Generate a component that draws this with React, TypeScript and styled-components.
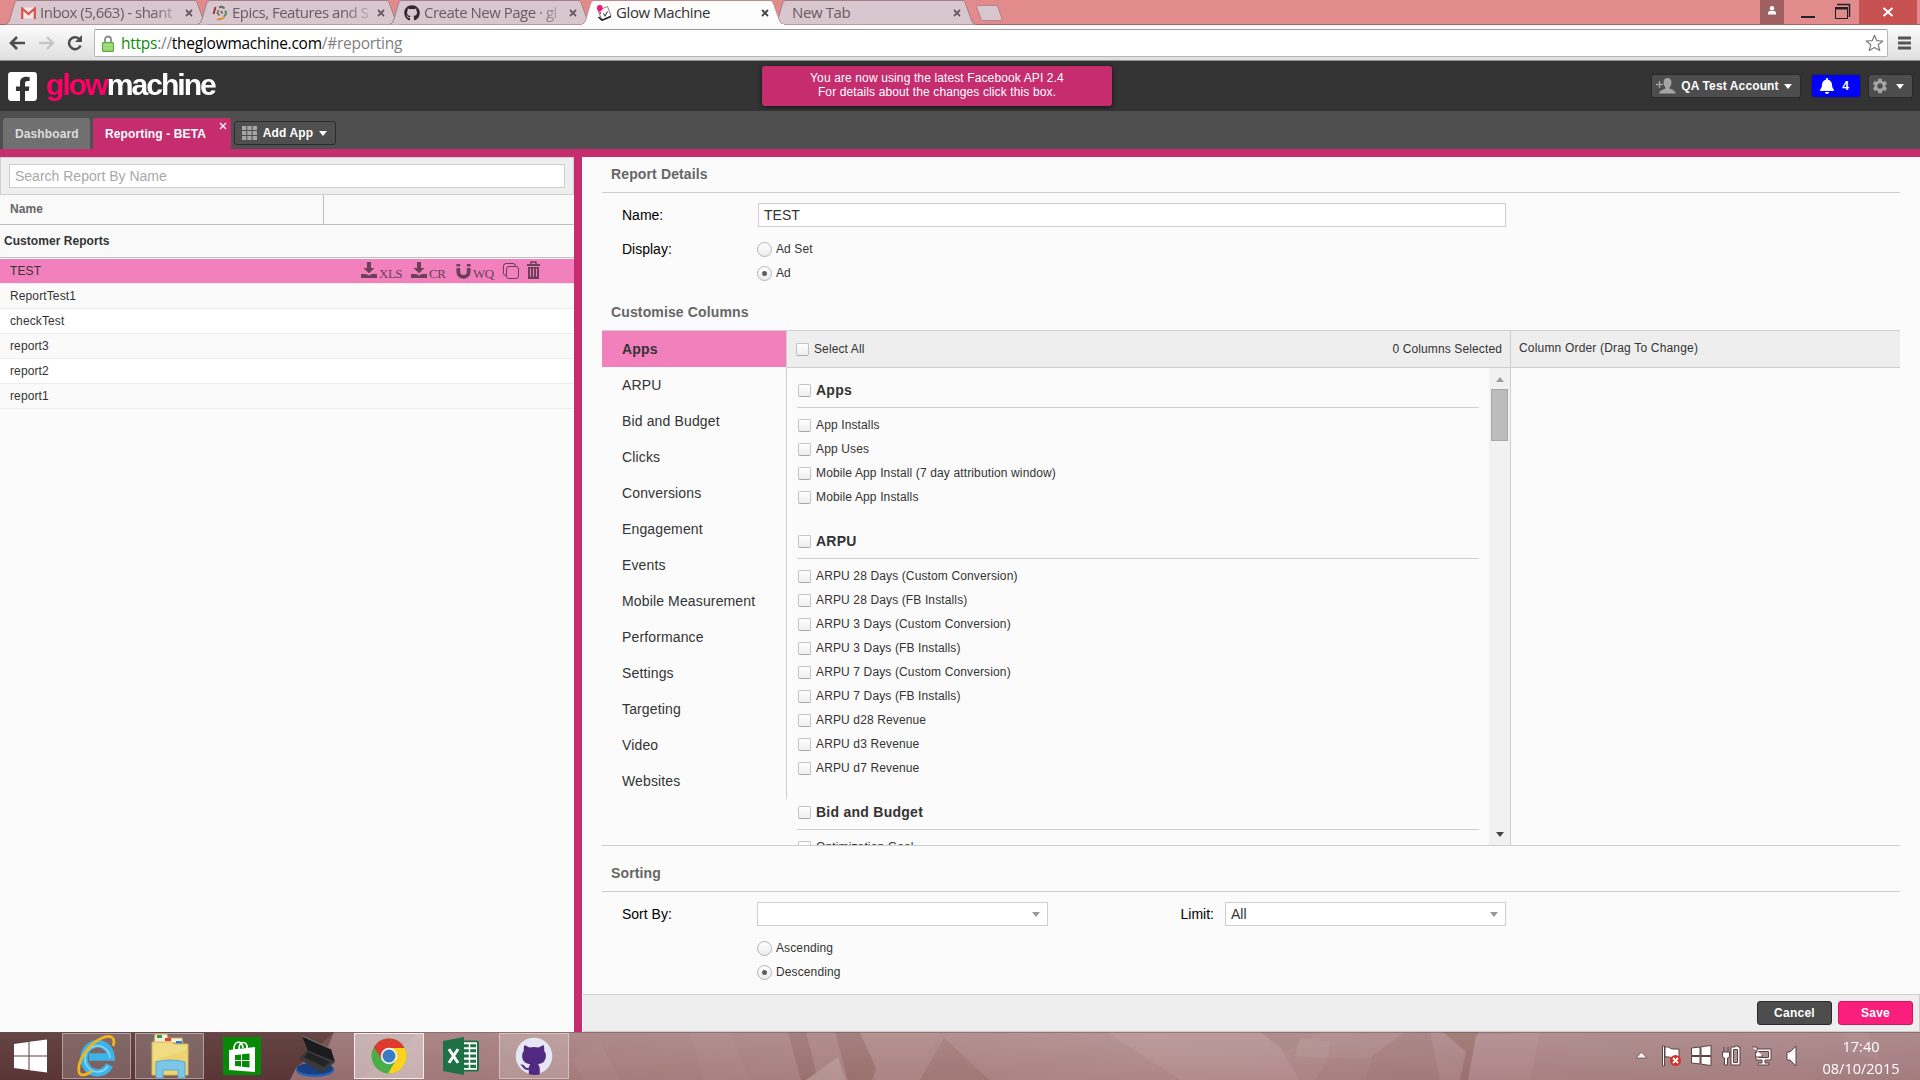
import React from "react";
import styled, { createGlobalStyle, css } from "styled-components";
import { FaBell, FaFacebookSquare, FaGithub } from "react-icons/fa";
import { MdSettings } from "react-icons/md";

const PINK = "#c52d6f";
const ROSE = "#f180bd";
const LINE = "#cecece";

const GlobalStyle = createGlobalStyle`
  * { box-sizing: border-box; }
  html, body { margin: 0; padding: 0; overflow: hidden; }
  body { font-family: "Liberation Sans", Arial, sans-serif; font-size: 12px; letter-spacing: 0.12px; color: #333; }
  svg { display: block; flex: none; }
`;

const Screen = styled.div`
  width: 1920px;
  height: 1080px;
  display: flex;
  flex-direction: column;
  overflow: hidden;
  background: #fbfbfb;
`;

/* ---------- Browser frame ---------- */

const TabStrip = styled.div`
  height: 25px;
  flex: none;
  display: flex;
  background: #e28b8d;
  border-bottom: 1px solid #a76365;
  padding-left: 5px;
`;

const BrowserTabBox = styled.div<{ $active?: boolean; $plain?: boolean }>`
  position: relative;
  z-index: ${(p) => (p.$active ? 2 : 1)};
  width: 204px;
  margin-right: -12px;
  height: 25px;
  flex: none;
  display: flex;
  align-items: center;
  padding: 0 16px 0 ${(p) => (p.$plain ? 19 : 15)}px;
  color: ${(p) => (p.$active ? "#333" : "#6d5a60")};
`;

const TabShape = styled.svg`
  position: absolute;
  left: 0;
  top: 0;
`;

const TabIcon = styled.span`
  position: relative;
  width: 16px;
  height: 18px;
  margin-right: 4px;
  display: flex;
  align-items: center;
  justify-content: center;
`;

const TabLabel = styled.span<{ $fade?: boolean }>`
  position: relative;
  flex: 1;
  height: 22px;
  line-height: 21px;
  overflow: hidden;
  white-space: nowrap;
  font-family: "Open Sans", "Noto Sans", sans-serif;
  font-size: 15px;
  letter-spacing: ${(p) => (p.$fade ? -0.5 : -0.4)}px;
  ${(p) =>
    p.$fade &&
    css`
      mask-image: linear-gradient(to right, #000 80%, transparent 103%);
    `}
`;

const TabClose = styled.svg`
  position: relative;
  margin-left: 4px;
`;

const NewTabButton = styled.svg`
  margin-left: 5px;
`;

const WindowControls = styled.div`
  margin-left: auto;
  display: flex;
  height: 24px;
  padding-right: 3px;
`;

const ControlCell = styled.div<{ $w: number; $bg?: string }>`
  width: ${(p) => p.$w}px;
  height: 24px;
  background: ${(p) => p.$bg ?? "transparent"};
  display: flex;
  align-items: center;
  justify-content: center;
`;

const BrowserBar = styled.div`
  height: 36px;
  flex: none;
  display: flex;
  align-items: center;
  padding: 1px 9px 0 9px;
  background: linear-gradient(#fcfcfc, #dfdfdf);
  border-bottom: 1px solid #8f8f8f;
`;

const NavIcons = styled.div`
  display: flex;
  gap: 12px;
  width: 85px;
  align-items: center;
`;

const Omnibox = styled.div`
  width: 1794px;
  height: 28px;
  background: #fff;
  border: 1px solid #b6b6b6;
  border-top-color: #999;
  border-radius: 2px;
  display: flex;
  align-items: center;
  padding: 0 3px 0 7px;
`;

const Url = styled.span`
  flex: 1;
  margin-left: 7px;
  font-family: "Open Sans", "Noto Sans", sans-serif;
  font-size: 15.5px;
  line-height: 22px;
  letter-spacing: -0.26px;
  color: #808080;
`;
const Secure = styled.span`
  color: #0c8c0c;
`;
const Host = styled.span`
  color: #000;
`;

/* ---------- Application header ---------- */

const Header = styled.header`
  height: 50px;
  flex: none;
  background: #333;
  display: flex;
  position: relative;
  padding: 14px 8px 0 6px;
`;

const Brand = styled.div`
  display: flex;
  height: 36px;
  margin-top: -5px;
`;

const Wordmark = styled.div`
  margin: -3px 0 0 7px;
  font-size: 30px;
  line-height: 36px;
  font-weight: 700;
  letter-spacing: -2px;
  color: #fff;
  transform: scaleX(1.005);
  transform-origin: 0 0;
`;
const Glow = styled.span`
  color: #ff0066;
`;

const Notice = styled.div`
  position: absolute;
  left: 762px;
  top: 5px;
  width: 350px;
  height: 40px;
  border-radius: 3px;
  background: ${PINK};
  color: #fff;
  text-align: center;
  line-height: 14px;
  padding-top: 5px;
  box-shadow: 0 1px 4px #111;
`;

const HeaderTools = styled.div`
  margin-left: auto;
  display: flex;
`;

const ToolButton = styled.div<{ $w: number; $bg?: string; $gap?: number; $pad?: string }>`
  width: ${(p) => p.$w}px;
  height: 22px;
  margin-right: ${(p) => p.$gap ?? 0}px;
  background: ${(p) => p.$bg ?? "#4d4d4d"};
  border-radius: 2px;
  display: flex;
  align-items: center;
  justify-content: space-between;
  padding: ${(p) => p.$pad ?? "0 8px 0 4px"};
  color: #fff;
  font-weight: 700;
  box-shadow: 0 0 0 1px #2a2a2a;
`;

const Caret = styled.i<{ $color?: string; $up?: boolean }>`
  width: 0;
  height: 0;
  border: 4px solid transparent;
  border-bottom-width: ${(p) => (p.$up ? 5 : 0)}px;
  border-top-width: ${(p) => (p.$up ? 0 : 5)}px;
  ${(p) => (p.$up ? "border-bottom-color" : "border-top-color")}: ${(p) => p.$color ?? "#fff"};
`;

const AppTabs = styled.nav`
  height: 46px;
  flex: none;
  background: #4f4f4f;
  border-bottom: 8px solid ${PINK};
  display: flex;
  padding: 7px 0 0 3px;
`;

const AppTab = styled.div<{ $active?: boolean; $w: number }>`
  width: ${(p) => p.$w}px;
  height: 31px;
  margin-right: 3px;
  padding-left: 12px;
  border-radius: 3px 3px 0 0;
  line-height: 32px;
  font-weight: 700;
  position: relative;
  background: ${(p) => (p.$active ? PINK : "#707070")};
  color: ${(p) => (p.$active ? "#fff" : "#ddd")};
`;

const AppTabClose = styled.svg`
  position: absolute;
  right: 4px;
  top: 4px;
`;

const AddApp = styled.div`
  width: 102px;
  height: 24px;
  margin-top: 3px;
  border: 1px solid #2b2b2b;
  border-radius: 3px;
  display: flex;
  align-items: center;
  justify-content: space-between;
  padding: 0 8px 0 7px;
  color: #fff;
  font-weight: 700;
`;

const Workspace = styled.main`
  flex: 1;
  min-height: 0;
  display: flex;
`;

/* ---------- Report list ---------- */

const Sidebar = styled.aside`
  width: 582px;
  border-right: 8px solid ${PINK};
`;

const SearchBar = styled.div`
  height: 38px;
  background: #eee;
  border: 1px solid #d0d0d0;
  padding: 6px 8px;
`;

const Field = styled.div<{ $w: number; $muted?: boolean }>`
  width: ${(p) => p.$w}px;
  height: 24px;
  background: #fff;
  border: 1px solid ${LINE};
  padding: 0 7px 0 5px;
  display: flex;
  align-items: center;
  justify-content: space-between;
  font-size: 14px;
  letter-spacing: 0;
  color: ${(p) => (p.$muted ? "#a9a9a9" : "#333")};
`;

const ListHead = styled.div`
  height: 30px;
  background: #f9f9f9;
  border-bottom: 1px solid #c0c0c0;
  display: flex;
  font-weight: 700;
  color: #666;
  line-height: 28px;
`;

const ListHeadCell = styled.div<{ $w: number; $divided?: boolean }>`
  width: ${(p) => p.$w}px;
  padding-left: 10px;
  border-right: ${(p) => (p.$divided ? "1px solid #c0c0c0" : "none")};
`;

const GroupRow = styled.div`
  height: 33px;
  margin-bottom: 1px;
  padding: 1px 0 0 4px;
  line-height: 30px;
  font-weight: 700;
  background: #f9f9f9;
  border-bottom: 1px solid #c0c0c0;
  letter-spacing: 0.05px;
`;

const ReportRow = styled.div<{ $selected?: boolean; $alt?: boolean }>`
  height: 25px;
  padding-left: 10px;
  display: flex;
  line-height: 24px;
  border-bottom: 1px solid #ededed;
  background: ${(p) => (p.$selected ? ROSE : p.$alt ? "#fafafa" : "#fff")};
`;

const RowActions = styled.div`
  margin: 0 34px 0 auto;
  display: flex;
  align-items: flex-start;
  color: #6b4058;
  font-family: "Liberation Serif", "Times New Roman", serif;
  font-size: 13px;
  line-height: 30px;
  letter-spacing: -0.5px;
`;

const RowAction = styled.span<{ $w: number; $top: number }>`
  width: ${(p) => p.$w}px;
  display: flex;
  gap: 2px;
  svg {
    margin-top: ${(p) => p.$top}px;
  }
`;

/* ---------- Report editor ---------- */

const Editor = styled.section`
  flex: 1;
  display: flex;
  flex-direction: column;
`;

const EditorBody = styled.div`
  flex: 1;
  margin: 0 20px;
`;

const SectionTitle = styled.h2<{ $h: number; $pt: number }>`
  margin: 0;
  height: ${(p) => p.$h}px;
  padding: ${(p) => p.$pt}px 0 0 9px;
  font-size: 14px;
  line-height: 18px;
  font-weight: 700;
  letter-spacing: 0.13px;
  color: #666;
  border-bottom: 1px solid ${LINE};
`;

const FormRow = styled.div`
  display: flex;
  margin-top: 10px;
`;

const FormLabel = styled.label<{ $w: number; $right?: boolean }>`
  width: ${(p) => p.$w}px;
  padding-left: 20px;
  padding-right: ${(p) => (p.$right ? 11 : 0)}px;
  text-align: ${(p) => (p.$right ? "right" : "left")};
  font-size: 14px;
  line-height: 24px;
  letter-spacing: 0;
  color: #000;
`;

const RadioLine = styled.div`
  height: 24px;
  display: flex;
  align-items: center;
  gap: 4px;
  line-height: 22px;
`;

const Radio = styled.span<{ $on?: boolean }>`
  width: 15px;
  height: 15px;
  margin-top: 1px;
  border: 1px solid #b5b5b5;
  border-radius: 50%;
  display: flex;
  align-items: center;
  justify-content: center;
  background: linear-gradient(#fff, #ececec);
  &::after {
    content: "";
    width: 5px;
    height: 5px;
    border-radius: 50%;
    background: ${(p) => (p.$on ? "#5c5c5c" : "transparent")};
  }
`;

const ColumnPicker = styled.div`
  height: 515px;
  display: flex;
  border-bottom: 1px solid ${LINE};
`;

const Categories = styled.div`
  width: 185px;
  height: 468px;
  border-right: 1px solid ${LINE};
`;

const Category = styled.div<{ $active?: boolean }>`
  height: 36px;
  padding-left: 20px;
  font-size: 14px;
  line-height: 36px;
  letter-spacing: 0.14px;
  ${(p) =>
    p.$active &&
    css`
      background: ${ROSE};
      font-weight: 700;
    `}
`;

const Available = styled.div`
  width: 724px;
  border-right: 1px solid ${LINE};
  display: flex;
  flex-direction: column;
`;

const PickerHead = styled.div`
  height: 37px;
  flex: none;
  background: #eee;
  border-bottom: 1px solid ${LINE};
  display: flex;
  align-items: center;
  justify-content: space-between;
  padding: 0 8px 0 9px;
`;

const PickerScroll = styled.div`
  flex: 1;
  min-height: 0;
  display: flex;
`;

const OptionList = styled.div`
  flex: 1;
  overflow: hidden;
  padding: 11px 10px 0;
`;

const OptionGroup = styled.div`
  margin-bottom: 21px;
`;

const GroupTitle = styled.div`
  height: 29px;
  padding: 0 0 6px 1px;
  margin-bottom: 5px;
  border-bottom: 1px solid ${LINE};
  display: flex;
  align-items: center;
  gap: 5px;
  font-size: 14px;
  font-weight: 700;
  letter-spacing: 0.26px;
`;

const Option = styled.div`
  height: 24px;
  padding-left: 1px;
  display: flex;
  align-items: center;
  gap: 5px;
  line-height: 22px;
  letter-spacing: 0.13px;
`;

const OptionText = styled.span`
  margin-top: -1px;
`;

const Checkbox = styled.span<{ $drop?: number }>`
  width: 13px;
  height: 13px;
  margin-top: ${(p) => p.$drop ?? 0}px;
  border: 1px solid #c4c4c4;
  border-bottom-color: #a8a8a8;
  border-radius: 2px;
  background: linear-gradient(#fff, #eee);
`;

const CheckLabel = styled.span`
  display: flex;
  align-items: center;
  gap: 5px;
`;

const Scrollbar = styled.div`
  width: 21px;
  background: #f1f1f1;
  display: flex;
  flex-direction: column;
  align-items: center;
  padding: 9px 0 8px;
`;

const Thumb = styled.div`
  width: 17px;
  height: 52px;
  margin: 7px 0 auto;
  background: #bcbcbc;
  border: 1px solid #a8a8a8;
`;

const Ordered = styled.div`
  flex: 1;
`;

const OrderHead = styled(PickerHead)`
  padding: 0 8px 2px;
  letter-spacing: 0.18px;
`;

const Footer = styled.footer`
  height: 38px;
  margin-left: 1px;
  background: #eee;
  border: 1px solid ${LINE};
  border-left: 0;
  display: flex;
  justify-content: flex-end;
  align-items: center;
  gap: 6px;
  padding-right: 6px;
`;

const Button = styled.button<{ $primary?: boolean }>`
  width: 75px;
  height: 24px;
  padding: 0;
  border-radius: 3px;
  border: 1px solid ${(p) => (p.$primary ? "#d6145f" : "#2b2b2b")};
  background: ${(p) => (p.$primary ? "#fa1e7d" : "#4d4d4d")};
  color: #fff;
  font: 700 12px "Liberation Sans", Arial, sans-serif;
  letter-spacing: 0.25px;
`;

/* ---------- Taskbar ---------- */

const Taskbar = styled.div`
  height: 48px;
  flex: none;
  position: relative;
  display: flex;
  background: #ab8787;
`;

const TaskbarArt = styled.svg`
  position: absolute;
  left: 0;
  top: 0;
`;

const TaskItem = styled.div<{ $w: number; $state?: "open" | "active"; $ml?: number }>`
  position: relative;
  width: ${(p) => p.$w}px;
  height: 46px;
  margin: 1px 0 0 ${(p) => p.$ml ?? 0}px;
  display: flex;
  align-items: center;
  justify-content: center;
  border: 1px solid
    ${(p) => (p.$state === "active" ? "#f3eaea" : p.$state === "open" ? "rgba(255,255,255,.38)" : "transparent")};
  background: ${(p) =>
    p.$state === "active" ? "rgba(255,255,255,.42)" : p.$state === "open" ? "rgba(255,255,255,.2)" : "none"};
`;

const Tray = styled.div`
  position: relative;
  margin-left: auto;
  display: flex;
  align-items: center;
`;

const Clock = styled.div`
  width: 119px;
  padding: 3px 0 0 1px;
  text-align: center;
  color: #fff;
  font-family: "Open Sans", "Noto Sans", sans-serif;
  font-size: 14.5px;
  line-height: 22px;
  letter-spacing: 0;
`;

/* ---------- Icons ---------- */

const GmailIcon = () => (
  <svg width="15" height="12" viewBox="0 0 15 12">
    <rect x="1" y="0.5" width="13" height="11" fill="#f4e6e6" />
    <path d="M1.2 12V1.5L7.5 7l6.3-5.5V12" fill="none" stroke="#d9534a" strokeWidth="2.2" />
  </svg>
);

const EpicsIcon = () => (
  <svg width="16" height="16" viewBox="0 0 16 16" fill="none" strokeWidth="2">
    <path d="M3.500 2 1.500 9" stroke="#a0304a" />
    <path d="M7 2.500l3-1 2.500 2" stroke="#55705a" />
    <path d="M13.500 5.500 14 9l-2 2.500" stroke="#5f8a62" />
    <path d="M6.500 5 5.500 8l2 2.500" stroke="#7a7a68" />
    <path d="M5 14.500l4-.5 3.500-2" stroke="#e58e2e" />
    <path d="M9 6l1.500 2.500" stroke="#666" strokeWidth="1.500" />
  </svg>
);

const GlowIcon = () => (
  <svg width="16" height="16" viewBox="0 0 16 16">
    <path d="M2 5.500 11.500 1.500l3.500 9.500-9 4z" fill="#fff" stroke="#777" strokeWidth="0.900" />
    <path d="M2.500 12l3.500 3.200 9-3.600" fill="none" stroke="#222" strokeWidth="1.600" />
    <path d="M7.500 8.500l1.500 2.500 2.500-4.500" fill="none" stroke="#444" strokeWidth="1.100" />
    <circle cx="3.800" cy="3" r="2.900" fill="#f01878" />
    <path d="M3.500 5l1 4" stroke="#f01878" strokeWidth="1.200" />
  </svg>
);

const DownloadIcon = () => (
  <svg width="16" height="16" viewBox="0 0 16 16" fill="currentColor">
    <path d="M6 0h4v6h3.500L8 11.2 2.500 6H6z" />
    <path d="M0 12h5l3 1.500L11 12h5v4H0z" />
  </svg>
);

const MagnetIcon = () => (
  <svg width="15" height="16" viewBox="0 0 15 16">
    <path d="M2.300 1v2.500M12.700 1v2.500" stroke="currentColor" strokeWidth="3.800" />
    <path d="M2.300 5v4a5.200 4.800 0 0 0 10.400 0V5" fill="none" stroke="currentColor" strokeWidth="3.800" />
  </svg>
);

const CopyIcon = () => (
  <svg width="16" height="16" viewBox="0 0 16 16" fill="none" stroke="currentColor">
    <path d="M3 12.500a2.500 2.500 0 0 1-2.500-2.500V3A2.500 2.500 0 0 1 3 .5h7A2.500 2.500 0 0 1 12.500 3" />
    <rect x="3.500" y="3.500" width="12" height="12" rx="2.500" />
  </svg>
);

const TrashIcon = () => (
  <svg width="13" height="18" viewBox="0 0 13 18">
    <path d="M4 3V1h5v2" fill="none" stroke="currentColor" strokeWidth="1.400" />
    <path d="M0 3h13v2H0zM1 6h11v12H1z" fill="currentColor" />
    <path d="M3.500 7.500v8M6.500 7.500v8M9.500 7.500v8" stroke={ROSE} strokeWidth="1" />
  </svg>
);

interface BrowserTabProps {
  label: string;
  icon?: React.ReactNode;
  active?: boolean;
  fade?: boolean;
}

const BrowserTab = ({ label, icon, active, fade }: BrowserTabProps) => (
  <BrowserTabBox $active={active} $plain={!icon}>
    <TabShape width="204" height="25" viewBox="0 0 204 25">
      <path
        d="M0 24.500C3 24 4 22 5 19L9 5C10 2 11 .5 13 .5H189C191 .5 192 2 193 5L198 19C199 22 200 24 203 24.500"
        fill={active ? "#fcfcfc" : "#d8c7ce"}
        stroke={active ? "#c4898b" : "#a37f85"}
      />
      {active && <path d="M1 25h202" stroke="#fcfcfc" strokeWidth="2" />}
    </TabShape>
    {icon && <TabIcon>{icon}</TabIcon>}
    <TabLabel $fade={fade}>{label}</TabLabel>
    <TabClose width="8" height="8" viewBox="0 0 8 8">
      <path d="M1 1l6 6M7 1 1 7" stroke={active ? "#444" : "#6d5a60"} strokeWidth="1.800" />
    </TabClose>
  </BrowserTabBox>
);

const reports = ["ReportTest1", "checkTest", "report3", "report2", "report1"];

const categories = [
  "Apps",
  "ARPU",
  "Bid and Budget",
  "Clicks",
  "Conversions",
  "Engagement",
  "Events",
  "Mobile Measurement",
  "Performance",
  "Settings",
  "Targeting",
  "Video",
  "Websites",
];

const groups = [
  {
    title: "Apps",
    items: ["App Installs", "App Uses", "Mobile App Install (7 day attribution window)", "Mobile App Installs"],
  },
  {
    title: "ARPU",
    items: [
      "ARPU 28 Days (Custom Conversion)",
      "ARPU 28 Days (FB Installs)",
      "ARPU 3 Days (Custom Conversion)",
      "ARPU 3 Days (FB Installs)",
      "ARPU 7 Days (Custom Conversion)",
      "ARPU 7 Days (FB Installs)",
      "ARPU d28 Revenue",
      "ARPU d3 Revenue",
      "ARPU d7 Revenue",
    ],
  },
  { title: "Bid and Budget", items: ["Optimization Goal"] },
];

const BrowserFrame = () => (
  <>
    <TabStrip>
      <BrowserTab label="Inbox (5,663) - shant" icon={<GmailIcon />} fade />
      <BrowserTab label="Epics, Features and S" icon={<EpicsIcon />} fade />
      <BrowserTab label="Create New Page · gl" icon={<FaGithub size={16} color="#33262b" />} fade />
      <BrowserTab label="Glow Machine" icon={<GlowIcon />} active />
      <BrowserTab label="New Tab" />
      <NewTabButton width="34" height="25" viewBox="0 0 34 25">
        <path
          d="M8 5.500H25c2 0 3 1 3.500 3l3 9c.5 2 0 3-2 3H14c-2 0-3-1-3.500-3L7 8c-.5-1.500 0-2.500 1-2.500z"
          fill="#d8c7ce"
          stroke="#b98085"
        />
      </NewTabButton>
      <WindowControls>
        <ControlCell $w={24} $bg="#9f6062">
          <svg width="10" height="14" viewBox="0 0 10 14" fill="#fff">
            <circle cx="5" cy="3.200" r="2.200" />
            <path d="M1 9.500V8q0-2 2-2h4q2 0 2 2v1.500z" />
          </svg>
        </ControlCell>
        <ControlCell $w={75}>
          <svg width="75" height="24" viewBox="0 0 75 24" fill="none" stroke="#222">
            <path d="M17 17h14" strokeWidth="2" />
            <rect x="51.500" y="7.500" width="12" height="11" />
            <path d="M51 8.500h13" strokeWidth="2" />
            <path d="M53 4.500h12.500V17" strokeWidth="1.500" />
          </svg>
        </ControlCell>
        <ControlCell $w={58} $bg="#c75050">
          <svg width="12" height="10" viewBox="0 0 12 10">
            <path d="M1.500 1l9 8M10.500 1l-9 8" stroke="#fff" strokeWidth="2" />
          </svg>
        </ControlCell>
      </WindowControls>
    </TabStrip>
    <BrowserBar>
      <NavIcons>
        <svg width="17" height="14" viewBox="0 0 17 14" fill="none" stroke="#4d4d4d" strokeWidth="2.600">
          <path d="M2 7h14M8 1 2 7l6 6" />
        </svg>
        <svg width="17" height="14" viewBox="0 0 17 14" fill="none" stroke="#c6c6c6" strokeWidth="2.400">
          <path d="M1 7h14M9 1l6 6-6 6" />
        </svg>
        <svg width="16" height="16" viewBox="0 0 16 16">
          <path d="M13.600 10.500A6 6 0 1 1 12 3.600" fill="none" stroke="#4d4d4d" strokeWidth="2.500" />
          <path d="M15 0v7H8z" fill="#4d4d4d" />
        </svg>
      </NavIcons>
      <Omnibox>
        <svg width="12" height="17" viewBox="0 0 12 17">
          <path d="M3 8V4.500a3 3 0 0 1 6 0V8" fill="none" stroke="#8a8a8a" strokeWidth="1.800" />
          <rect x="0.500" y="7.500" width="11" height="9" rx="0.500" fill="#8fd468" stroke="#5ca83c" />
          <path d="M1.500 10h9M1.500 13h9" stroke="#b5e898" />
        </svg>
        <Url>
          <Secure>https</Secure>://<Host>theglowmachine.com</Host>/#reporting
        </Url>
        <svg width="19" height="18" viewBox="0 0 19 18">
          <path
            d="M9.500 1.200 11.700 6.600 17.800 7 13.200 10.800 14.800 16.500 9.500 13.400 4.200 16.500 5.800 10.800 1.200 7 7.300 6.600z"
            fill="#fff"
            stroke="#7c7c7c"
            strokeWidth="1.200"
            strokeLinejoin="round"
          />
        </svg>
      </Omnibox>
      <svg width="23" height="14" viewBox="0 0 23 14">
        <path d="M10 2h13M10 7h13M10 12h13" stroke="#555" strokeWidth="3" />
      </svg>
    </BrowserBar>
  </>
);

const AppHeader = () => (
  <>
    <Header>
      <Brand>
        <FaFacebookSquare size={33} color="#fff" />
        <Wordmark>
          <Glow>glow</Glow>machine
        </Wordmark>
      </Brand>
      <Notice>
        You are now using the latest Facebook API 2.4
        <br />
        For details about the changes click this box.
      </Notice>
      <HeaderTools>
        <ToolButton $w={148} $gap={12}>
          <svg width="20" height="16" viewBox="0 0 20 16" fill="#a5a5a5">
            <path d="M0 6.500h7M3.500 3v7" stroke="#a5a5a5" strokeWidth="1.300" />
            <path d="M11.500 0C14.500 0 15.600 2 15.400 5c-.2 2-.9 3.500-1.900 4.500v1c2 1 5.500 1.500 6.200 5H3c.5-3 4.500-4 6.500-5v-1C8.500 8.500 7.800 7 7.600 5 7.400 2 8.500 0 11.500 0z" />
          </svg>
          QA Test Account
          <Caret />
        </ToolButton>
        <ToolButton $w={48} $bg="#0000ff" $gap={9} $pad="0 11px 0 7px">
          <FaBell size={16} />
          <span>4</span>
        </ToolButton>
        <ToolButton $w={43} $pad="0 8px 0 2px">
          <MdSettings size={18} color="#a5a5a5" />
          <Caret />
        </ToolButton>
      </HeaderTools>
    </Header>
    <AppTabs>
      <AppTab $w={87}>Dashboard</AppTab>
      <AppTab $w={138} $active>
        Reporting - BETA
        <AppTabClose width="8" height="8" viewBox="0 0 8 8">
          <path d="M1 1l6 6M7 1 1 7" stroke="#fff" strokeWidth="1.300" />
        </AppTabClose>
      </AppTab>
      <AddApp>
        <svg width="15" height="14" viewBox="0 0 15 14" fill="#a5a5a5">
          <path d="M0 0h4.300v4H0zM5.300 0h4.300v4H5.300zM10.700 0H15v4h-4.300zM0 5h4.300v4H0zM5.300 5h4.300v4H5.300zM10.700 5H15v4h-4.300zM0 10h4.300v4H0zM5.300 10h4.300v4H5.300zM10.700 10H15v4h-4.300z" />
        </svg>
        Add App
        <Caret />
      </AddApp>
    </AppTabs>
  </>
);

const ReportList = () => (
  <Sidebar>
    <SearchBar>
      <Field $w={556} $muted>
        Search Report By Name
      </Field>
    </SearchBar>
    <ListHead>
      <ListHeadCell $w={324} $divided>
        Name
      </ListHeadCell>
      <ListHeadCell $w={250} />
    </ListHead>
    <GroupRow>Customer Reports</GroupRow>
    <ReportRow $selected>
      TEST
      <RowActions>
        <RowAction $w={50} $top={3}>
          <DownloadIcon />
          XLS
        </RowAction>
        <RowAction $w={45} $top={3}>
          <DownloadIcon />
          CR
        </RowAction>
        <RowAction $w={47} $top={4}>
          <MagnetIcon />
          WQ
        </RowAction>
        <RowAction $w={24} $top={4}>
          <CopyIcon />
        </RowAction>
        <RowAction $w={13} $top={2}>
          <TrashIcon />
        </RowAction>
      </RowActions>
    </ReportRow>
    {reports.map((name, i) => (
      <ReportRow key={name} $alt={i % 2 === 0}>
        {name}
      </ReportRow>
    ))}
  </Sidebar>
);

const Columns = () => (
  <ColumnPicker>
    <Categories>
      {categories.map((name, i) => (
        <Category key={name} $active={i === 0}>
          {name}
        </Category>
      ))}
    </Categories>
    <Available>
      <PickerHead>
        <CheckLabel>
          <Checkbox $drop={1} />
          Select All
        </CheckLabel>
        <span>0 Columns Selected</span>
      </PickerHead>
      <PickerScroll>
        <OptionList>
          {groups.map((group) => (
            <OptionGroup key={group.title}>
              <GroupTitle>
                <Checkbox />
                {group.title}
              </GroupTitle>
              {group.items.map((item) => (
                <Option key={item}>
                  <Checkbox $drop={1} />
                  <OptionText>{item}</OptionText>
                </Option>
              ))}
            </OptionGroup>
          ))}
        </OptionList>
        <Scrollbar>
          <Caret $up $color="#a0a0a0" />
          <Thumb />
          <Caret $color="#444" />
        </Scrollbar>
      </PickerScroll>
    </Available>
    <Ordered>
      <OrderHead>Column Order (Drag To Change)</OrderHead>
    </Ordered>
  </ColumnPicker>
);

const ReportEditor = () => (
  <Editor>
    <EditorBody>
      <SectionTitle $h={36} $pt={8}>
        Report Details
      </SectionTitle>
      <FormRow>
        <FormLabel $w={156}>Name:</FormLabel>
        <Field $w={748}>TEST</Field>
      </FormRow>
      <FormRow>
        <FormLabel $w={155}>Display:</FormLabel>
        <div>
          <RadioLine>
            <Radio />
            Ad Set
          </RadioLine>
          <RadioLine>
            <Radio $on />
            Ad
          </RadioLine>
        </div>
      </FormRow>
      <SectionTitle $h={46} $pt={18}>
        Customise Columns
      </SectionTitle>
      <Columns />
      <SectionTitle $h={46} $pt={18}>
        Sorting
      </SectionTitle>
      <FormRow>
        <FormLabel $w={155}>Sort By:</FormLabel>
        <Field $w={291}>
          <span />
          <Caret $color="#999" />
        </Field>
        <FormLabel $w={177} $right>
          Limit:
        </FormLabel>
        <Field $w={281}>
          All
          <Caret $color="#999" />
        </Field>
      </FormRow>
      <FormRow>
        <FormLabel $w={155} />
        <div>
          <RadioLine>
            <Radio />
            Ascending
          </RadioLine>
          <RadioLine>
            <Radio $on />
            Descending
          </RadioLine>
        </div>
      </FormRow>
    </EditorBody>
    <Footer>
      <Button>Cancel</Button>
      <Button $primary>Save</Button>
    </Footer>
  </Editor>
);

const WindowsTaskbar = () => (
  <Taskbar>
    <TaskbarArt width="1920" height="48" viewBox="0 0 1920 48">
      <defs>
        <linearGradient id="rose" x1="0" x2="1" y1="0" y2="0">
          <stop offset="0" stopColor="#9b7679" />
          <stop offset="0.300" stopColor="#a98383" />
          <stop offset="0.600" stopColor="#b38f90" />
          <stop offset="1" stopColor="#a88486" />
        </linearGradient>
        <linearGradient id="shade" x1="0" x2="0" y1="0" y2="1">
          <stop offset="0" stopColor="#fff" stopOpacity="0.060" />
          <stop offset="1" stopColor="#500" stopOpacity="0.060" />
        </linearGradient>
      </defs>
      <rect width="1920" height="48" fill="url(#rose)" />
      <path d="M0 0H334L326 20 310 26 296 36 290 48H0z" fill="#5b3939" />
      <g opacity="0.600">
        <path d="M334 0H420L360 48H290l8-14z" fill="#8f6a6c" opacity="0.700" />
        <path d="M585 48 570 28 600 10 620 48zM690 0h40l20 48h-46z" fill="#b59294" opacity="0.600" />
        <path d="M788 0H806L818 48H801z" fill="#96706b" />
        <path d="M835 0H860L876 36 872 48H848z" fill="#966f69" />
        <path d="M860 0h80l-20 48h-45l1-12z" fill="#b18f8d" />
        <path d="M944 6 990 48H920z" fill="#9f7a76" />
        <path d="M806 48 838 25 846 48z" fill="#c4a9a9" />
        <path d="M1107 0H1270L1300 48H1180z" fill="#bd999b" />
        <path d="M1260 0h60l-34 20z" fill="#aa8584" />
        <path d="M1300 6 1330 10 1328 26 1295 24z" fill="#bea0a0" opacity="0.600" />
        <path d="M1365 48 1372 24 1405 0H1430L1440 48z" fill="#a17d7b" />
        <path d="M1330 26h42l-7 22h-50z" fill="#a98481" />
        <path d="M1443 0H1478L1470 48H1460L1466 20z" fill="#936c64" />
        <path d="M1476 4 1540 0 1530 48H1468z" fill="#b69295" />
        <path d="M1840 0 1868 0 1880 30 1850 20z" fill="#b89496" opacity="0.600" />
      </g>
      <rect width="1920" height="48" fill="url(#shade)" />
      <path d="M0 .5H1920" stroke="#6b4c4c" opacity="0.450" />
    </TaskbarArt>
    <TaskItem $w={60}>
      <svg width="33" height="34" viewBox="0 0 33 34" fill="#fff">
        <path d="M0 5 14.500 3v13.500H0zM15.500 2.800 33 .5v16H15.500zM0 17.500h14.500V31L0 29zM15.500 17.500H33v16l-17.500-2.300z" />
      </svg>
    </TaskItem>
    <TaskItem $w={69} $ml={2} $state="open">
      <svg width="40" height="44" viewBox="0 0 40 44" fill="none">
        <path d="M32.500 31a13.500 14.500 0 1 1 1.500-8H12" stroke="#3cb4e8" strokeWidth="7.500" />
        <path d="M31 32a12.500 13 0 1 1 2-8" stroke="#8fdcf8" strokeWidth="1.500" />
        <path d="M36 12C39 4 34 0 25 4 12 10 0 26 2 38c1 5 8 3 13-1" stroke="#f2b51c" strokeWidth="2.800" />
      </svg>
    </TaskItem>
    <TaskItem $w={69} $ml={4} $state="open">
      <svg width="40" height="46" viewBox="0 0 40 46">
        <path d="M5 1h12l1 4h14l1 5H4z" fill="#f4f0dc" stroke="#c9a84a" />
        <path d="M7 2h5v3H7z" fill="#2c9a4a" />
        <path d="M15 5h6v3h-6z" fill="#e0402a" />
        <path d="M26 8h6v3h-6z" fill="#2a80d0" />
        <path d="M2 9h20l2 2h14v31H2z" fill="#f0dc82" stroke="#d3b457" />
        <path d="M3 28 38 16v25H3z" fill="#e9ce68" opacity="0.600" />
        <path d="M6 29q14-4 29 0v16h-7v-8H13v8H6z" fill="#7cc6e8" stroke="#5aa8d0" />
      </svg>
    </TaskItem>
    <TaskItem $w={70} $ml={3}>
      <svg width="38" height="38" viewBox="0 0 38 38">
        <path d="M0 0h38v38H0z" fill="#048a04" />
        <path d="M6 13 32 10v25L6 33z" fill="#fff" />
        <path d="M11 13C10 3 20 3 20 11M16 12c0-9 9-8 8-1" fill="none" stroke="#fff" strokeWidth="1.700" />
        <path d="M12 18l6-.6V23h-6zM19 17.300l7.500-.7V23H19zM12 24h6v5.600l-6-.6zM19 24h7.500v6.400l-7.500-.7z" fill="#048a04" />
      </svg>
    </TaskItem>
    <TaskItem $w={70} $ml={3}>
      <svg width="42" height="46" viewBox="0 0 42 46">
        <ellipse cx="21" cy="37" rx="19" ry="7" fill="#2560b4" />
        <ellipse cx="21" cy="35.500" rx="18" ry="6" fill="#163f84" />
        <path d="M8 3 37 16 41 29 14 18z" fill="#1b1b1d" />
        <path d="M13 17 41 29 28 40 5 26z" fill="#3a3a3d" />
        <path d="M14 19 36 29 30 34 10 24z" fill="#232325" />
        <path d="M8 3 37 16" stroke="#777" />
      </svg>
    </TaskItem>
    <TaskItem $w={70} $ml={4} $state="active">
      <svg width="36" height="44" viewBox="0 0 36 36">
        <circle cx="18" cy="18" r="17.500" fill="#4aae48" />
        <path d="M18 18 2.800 9.300A17.500 17.500 0 0 1 33.500 10H18z" fill="#de3b2e" />
        <path d="M18 10H33.600A17.500 17.500 0 0 1 17 35.500L25 22z" fill="#fcd21c" />
        <path d="M2.800 9.300 11.200 22 18 18V10z" fill="#de3b2e" />
        <circle cx="18" cy="18" r="8.200" fill="#f3f3f3" />
        <circle cx="18" cy="18" r="6.500" fill="#3a7cc4" />
      </svg>
    </TaskItem>
    <TaskItem $w={70} $ml={2}>
      <svg width="38" height="38" viewBox="0 0 38 44" preserveAspectRatio="none">
        <rect x="18" y="5" width="18" height="34" rx="1" fill="#fff" stroke="#1e7145" strokeWidth="2" />
        <path d="M22 10h12M22 16h12M22 22h12M22 28h12M22 34h12" stroke="#1e7145" strokeWidth="3.500" />
        <path d="M27.500 8v28" stroke="#fff" strokeWidth="1.500" />
        <path d="M1 4.500 22 0v44L1 39.500z" fill="#1e7145" />
        <path d="M7 14l9 16M16 14 7 30" stroke="#fff" strokeWidth="3" />
      </svg>
    </TaskItem>
    <TaskItem $w={70} $ml={3} $state="open">
      <svg width="38" height="42" viewBox="0 0 38 42">
        <circle cx="19" cy="21" r="18.300" fill="#e6e6f6" />
        <path
          d="M9.500 10l5 2.500q4.500-1 9 0l5-2.500q1.200 3 .6 5.500 2.400 3 1.700 7-1 6-7.800 6.500 1.800 2 1.800 5v5.300q-5 1.500-11 0v-4.500q-4 .8-6-2.500-1-1.800-2.500-2.500 3-.8 4.800 2 1.200 1.800 3.700 1 .3-2.500 1.400-3.600Q8 28.500 7.200 22.500q-.6-4 1.700-7Q8.300 13 9.500 10z"
          fill="#4f2a80"
        />
      </svg>
    </TaskItem>
    <Tray>
      <svg width="165" height="24" viewBox="0 0 165 24">
        <path d="M0 14 5.500 8 11 14z" fill="#f4f2f8" stroke="#6b4f50" strokeWidth="0.800" />
        <g stroke="#5e4040" strokeWidth="1">
          <path d="M26.500 2h2v20h-2zM29 3c4-1 5 2 8 2h6v9h-6c-3 0-4-2-8-1z" fill="#fff" />
          <path
            d="M55.500 4 64 3V11.500h-8.500zM65 2.800 75 1.500V11.500H65zM55.500 12.500H64V20l-8.500-1zM65 12.500h10V21.500l-10-1.300z"
            fill="#fff"
          />
          <path d="M88 3v5M92 3v5M86.500 8h7v4q0 2-2 2v7h-3v-7q-2 0-2-2z" fill="#fff" />
          <path d="M97 3h2V2h3v1h2v18H95V3z" fill="#fff" />
          <path d="M97.500 5.500h4v13h-4z" fill="#b29090" />
          <path d="M120 5h15v11h-6v3h4v2h-11v-2h4v-3h-6z" fill="#fff" />
          <path d="M122.500 7.500h10v6h-10z" fill="#b29090" />
          <path d="M116 3h5v5l-1.500 1.500V13H126v-2" fill="#fff" />
          <path d="M151 8h3l6-6v20l-6-6h-3z" fill="#fff" />
        </g>
        <circle cx="39.500" cy="16.500" r="5.500" fill="#d6302a" />
        <path d="M37 14l5 5M42 14l-5 5" stroke="#fff" strokeWidth="1.800" />
      </svg>
      <Clock>
        17:40
        <br />
        08/10/2015
      </Clock>
    </Tray>
  </Taskbar>
);

export default function App() {
  return (
    <Screen>
      <GlobalStyle />
      <BrowserFrame />
      <AppHeader />
      <Workspace>
        <ReportList />
        <ReportEditor />
      </Workspace>
      <WindowsTaskbar />
    </Screen>
  );
}
